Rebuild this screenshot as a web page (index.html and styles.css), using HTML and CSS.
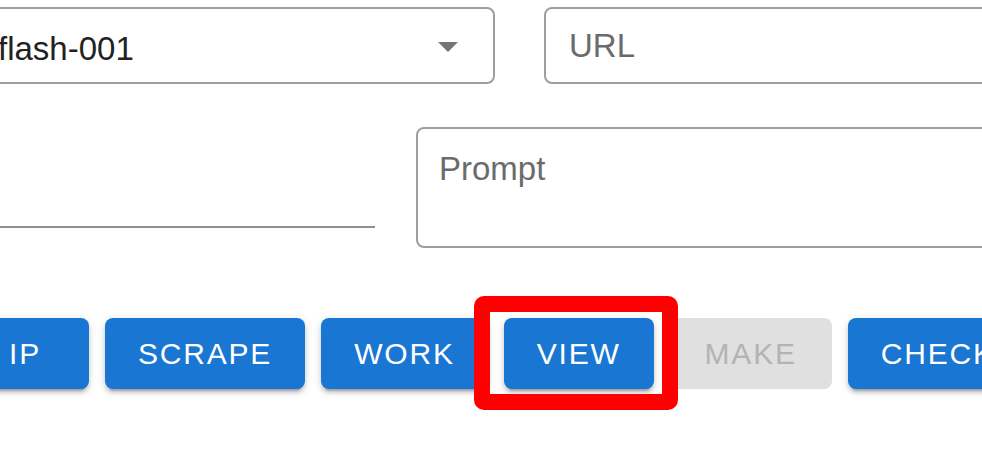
FILE: index.html
```html
<!DOCTYPE html>
<html lang="en">
<head>
<meta charset="utf-8">
<title>Form</title>
<link rel="stylesheet" href="styles.css">
</head>
<body>
<div class="page">
  <div class="row row-top">
    <div class="field select">
      <span class="value">flash-001</span>
      <svg class="arrow" viewBox="0 0 20 10" width="20" height="10"><path d="M0 0 L20 0 L10 10 Z" fill="#757575"/></svg>
    </div>
    <div class="field url"><span class="label">URL</span></div>
  </div>
  <div class="row row-mid">
    <div class="standard"></div>
    <div class="field prompt"><span class="label">Prompt</span></div>
  </div>
  <div class="row buttons">
    <button class="btn">IP</button>
    <button class="btn">SCRAPE</button>
    <button class="btn">WORK</button>
    <span class="highlight"><button class="btn">VIEW</button></span>
    <button class="btn btn-disabled" disabled>MAKE</button>
    <button class="btn">CHECK</button>
  </div>
</div>
</body>
</html>
```
FILE: styles.css
```css
html, body {
  margin: 0;
  padding: 0;
  background: #ffffff;
}
body {
  width: 982px;
  height: 458px;
  overflow: hidden;
  font-family: "Liberation Sans", Arial, sans-serif;
}
.page {
  margin-left: -39px;
  padding-top: 7px;
}
.row {
  display: flex;
  flex-wrap: nowrap;
}
.row-top {
  gap: 49px;
}
.field {
  box-sizing: border-box;
  border: 2px solid #9e9e9e;
  border-radius: 8px;
  flex-shrink: 0;
  font-size: 33px;
  line-height: 38px;
}
.select {
  width: 534px;
  height: 77px;
  display: flex;
  align-items: flex-start;
  justify-content: space-between;
  padding: 21px 35px 0 35px;
  color: #222222;
}
.arrow {
  margin-top: 12px;
}
.url {
  width: 600px;
  height: 77px;
  padding: 18px 0 0 23px;
  color: #6b6b6b;
}
.row-mid {
  margin-top: 43px;
  gap: 41px;
  align-items: flex-start;
}
.standard {
  box-sizing: border-box;
  width: 414px;
  height: 101px;
  border-bottom: 2px solid #8f8f8f;
  flex-shrink: 0;
}
.prompt {
  width: 600px;
  height: 121px;
  padding: 21px 0 0 21px;
  color: #6b6b6b;
}
.buttons {
  margin-top: 70px;
  gap: 16px;
  align-items: center;
}
.btn {
  box-sizing: border-box;
  flex-shrink: 0;
  height: 71px;
  min-width: 128px;
  padding: 0 33px;
  border: none;
  border-radius: 8px;
  background: #1976d2;
  color: #ffffff;
  font-family: "Liberation Sans", Arial, sans-serif;
  font-size: 30px;
  letter-spacing: 1.8px;
  text-transform: uppercase;
  box-shadow: 0 6px 2px -4px rgba(0, 0, 0, 0.2), 0 4px 4px 0 rgba(0, 0, 0, 0.14), 0 2px 10px 0 rgba(0, 0, 0, 0.12);
}
.btn-disabled {
  background: #e0e0e0;
  color: #b3b3b3;
  box-shadow: none;
  padding: 0 35px;
}
.highlight {
  position: relative;
  display: inline-flex;
  flex-shrink: 0;
}
.highlight::after {
  content: "";
  position: absolute;
  left: -30px;
  right: -24px;
  top: -22px;
  bottom: -21px;
  border: 16px solid #ff0000;
  border-radius: 10px;
  pointer-events: none;
}
```
